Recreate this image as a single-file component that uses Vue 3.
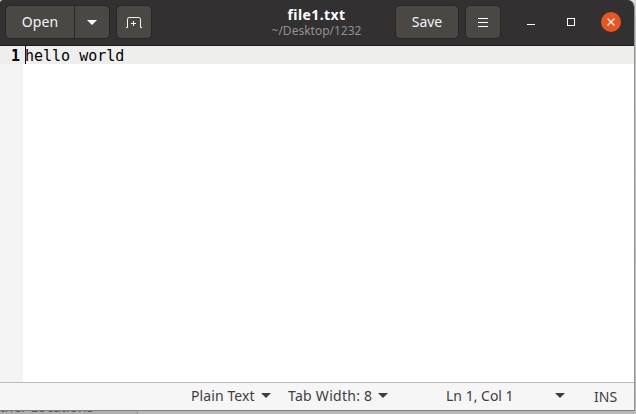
<script setup>
const title = 'file1.txt'
const folder = '~/Desktop/1232'
const lines = ['hello world']
</script>

<template>
  <div class="desktop">
    <div class="window">
      <header class="bar">
        <div class="split">
          <button class="btn open"><span>Open</span></button>
          <button class="btn drop">
            <svg width="10" height="5" viewBox="0 0 10 5"><path d="M0 0H10L5 5Z" fill="#fff" /></svg>
          </button>
        </div>
        <button class="btn square new">
          <svg width="16" height="12" viewBox="0 0 16 12" fill="none" stroke="#f4f4f2">
            <path d="M0 10.5H1.5V2.2Q1.5 .5 3.2 .5H12.8Q14.5 .5 14.5 2.2V10.5H16M5 6.5H10M7.5 4V9" />
          </svg>
        </button>
        <div class="heading">
          <div class="title">{{ title }}</div>
          <div class="folder">{{ folder }}</div>
        </div>
        <button class="btn save"><span>Save</span></button>
        <button class="btn square menu">
          <svg width="10" height="9" viewBox="0 0 10 9"><path d="M0 .5H10M0 4.5H10M0 8.5H10" stroke="#fff" /></svg>
        </button>
        <div class="controls">
          <svg width="8" height="8" viewBox="0 0 8 8"><path d="M0 6.5H8" stroke="#fff" /></svg>
          <svg width="8" height="8" viewBox="0 0 8 8"><rect x=".5" y=".5" width="7" height="7" fill="none" stroke="#fff" /></svg>
          <svg width="20" height="20" viewBox="0 0 20 20">
            <circle cx="10" cy="10" r="10" fill="#e95420" />
            <path d="M6.5 6.5L13.5 13.5M13.5 6.5L6.5 13.5" stroke="#fff" stroke-width="1.3" />
          </svg>
        </div>
      </header>
      <main class="editor">
        <div v-for="(line, i) in lines" :key="i" class="line">
          <span class="number">{{ i + 1 }}</span>
          <span class="code">{{ line }}</span>
        </div>
        <div class="gutter"></div>
      </main>
      <footer class="status">
        <span class="language">Plain Text</span>
        <svg class="arrow" width="10" height="5" viewBox="0 0 10 5"><path d="M0 0H10L5 5Z" /></svg>
        <span class="tab">Tab Width: 8</span>
        <svg class="arrow" width="10" height="5" viewBox="0 0 10 5"><path d="M0 0H10L5 5Z" /></svg>
        <span class="position">Ln 1, Col 1</span>
        <svg class="arrow last" width="10" height="5" viewBox="0 0 10 5"><path d="M0 0H10L5 5Z" /></svg>
        <span class="mode">INS</span>
      </footer>
    </div>
    <div class="behind"><span>other Locations</span></div>
  </div>
</template>

<style>
body { margin: 0; overflow: hidden; }
</style>

<style scoped>
.desktop {
  width: 636px;
  height: 414px;
  overflow: hidden;
  background: linear-gradient(#ddd, #c4c4c4 20px, #b8b8b8);
  font-family: "Noto Sans", "Open Sans", sans-serif;
  font-size: 14px;
}
.window {
  box-sizing: border-box;
  display: flex;
  flex-direction: column;
  width: 635px;
  height: 411px;
  border-right: 1px solid #939393;
  border-bottom: 1px solid #808080;
  border-radius: 3px 7px 0 0;
  overflow: hidden;
  background: #fff;
}
.bar {
  box-sizing: border-box;
  display: flex;
  flex: none;
  height: 46px;
  padding: 5px 0 0 5px;
  background: #333031;
  border-bottom: 1px solid #1d1b1c;
}
.btn {
  box-sizing: border-box;
  display: flex;
  align-items: center;
  justify-content: center;
  height: 34px;
  padding: 0;
  border: 1px solid #282627;
  border-radius: 5px;
  background: #4a4845;
  color: #f4f4f2;
  font: inherit;
  line-height: 20px;
}
.split { display: flex; }
.open { width: 70px; border-radius: 5px 0 0 5px; letter-spacing: 0.1px; }
.drop { width: 36px; margin-left: -1px; border-radius: 0 5px 5px 0; }
.square { width: 36px; margin-left: 6px; }
.new svg { margin-top: 2px; }
.heading { box-sizing: border-box; width: 243px; padding-left: 86px; text-align: center; white-space: nowrap; }
.title { margin-top: 1px; color: #fff; font-weight: 700; line-height: 18px; letter-spacing: 0.4px; }
.folder { color: #929190; font-size: 12px; line-height: 14px; }
.save { width: 64px; }
.controls { display: flex; align-items: center; height: 34px; margin-left: 26px; }
.controls svg { margin-right: 32px; }
.controls svg:nth-child(2) { margin-right: 26px; }
.controls svg:last-child { margin-right: 0; }
.editor { display: flex; flex: 1; flex-direction: column; }
.line {
  display: flex;
  height: 18px;
  background: #eeeeec;
  color: #000;
  font: 15px/21px "DejaVu Sans Mono", monospace;
}
.number { width: 20px; margin-right: 5px; text-align: right; font-weight: 700; }
.code { position: relative; white-space: pre; }
.code::before {
  content: "";
  position: absolute;
  top: 0;
  left: 0;
  width: 1px;
  height: 18px;
  background: #111;
}
.gutter { flex: 1; width: 23px; background: #f4f4f4; }
.status {
  box-sizing: border-box;
  display: flex;
  flex: none;
  height: 28px;
  padding-left: 191px;
  border-top: 1px solid #bbb;
  background: #f6f6f6;
  color: #3d3d3d;
  line-height: 26px;
  white-space: nowrap;
}
.language { width: 70px; letter-spacing: 0.1px; }
.arrow { margin-top: 10px; fill: #3d3d3d; }
.tab { width: 90px; margin-left: 17px; letter-spacing: 0.27px; }
.position { width: 109px; margin-left: 58px; }
.mode { margin-left: 29px; line-height: 28px; }
.behind {
  height: 3px;
  width: 137px;
  overflow: hidden;
  border-right: 1px solid #929292;
  background: #afafaf;
  color: #595959;
}
.behind span { display: block; margin: -13px 0 0 -9px; line-height: 18px; }
</style>
